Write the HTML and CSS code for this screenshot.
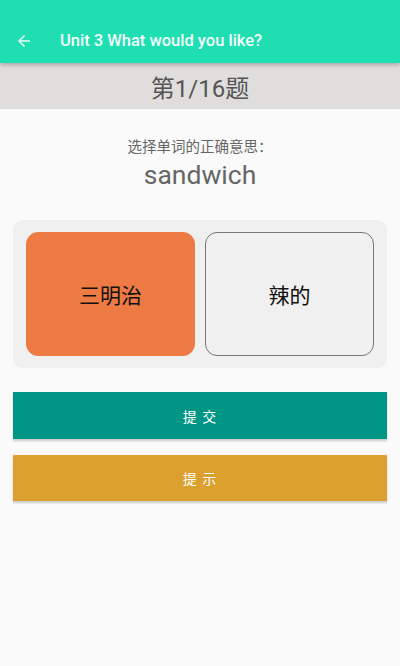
FILE: index.html
```html
<!DOCTYPE html>
<html lang="zh">
<head>
<meta charset="utf-8">
<link rel="stylesheet" href="styles.css">
</head>
<body>
<header class="appbar">
  <div class="toolbar">
    <svg class="back" width="18" height="18" viewBox="0 0 24 24"><path d="M20 11H7.83l5.59-5.59L12 4l-8 8 8 8 1.41-1.41L7.83 13H20v-2z" fill="#e8fff8"/></svg>
    <span class="title">Unit 3 What would you like?</span>
  </div>
</header>
<div class="progress">第1/16题</div>
<main class="content">
  <div class="prompt">选择单词的正确意思：</div>
  <div class="word">sandwich</div>
  <div class="options">
    <div class="opt selected">三明治</div>
    <div class="opt">辣的</div>
  </div>
  <button class="btn submit">提 交</button>
  <button class="btn hint">提 示</button>
</main>
</body>
</html>
```

FILE: styles.css
```css
* { box-sizing: border-box; }
html, body { margin: 0; padding: 0; }
body {
  width: 400px;
  height: 666px;
  background: #fafafa;
  font-family: Roboto, "Noto Sans CJK SC", sans-serif;
  overflow: hidden;
}
.appbar {
  background: #1fdeb2;
  height: 63px;
  padding-top: 19px;
  box-shadow: 0 2px 4px rgba(0,0,0,0.25);
  position: relative;
  z-index: 2;
}
.toolbar {
  height: 43px;
  display: flex;
  align-items: center;
}
.back { margin-left: 15px; margin-right: 27px; }
.title {
  color: #f4fffb;
  font-size: 16.5px;
  font-weight: 500;
}
.progress {
  height: 46px;
  background: #e0dedd;
  color: #555;
  font-size: 24px;
  display: flex;
  align-items: center;
  justify-content: center;
}
.content {
  padding: 0 13px;
  display: flex;
  flex-direction: column;
}
.prompt {
  margin-top: 29px;
  text-align: center;
  color: #666;
  font-size: 14.5px;
  line-height: 20px;
}
.word {
  text-align: center;
  color: #666;
  font-size: 26.5px;
  line-height: 30px;
  margin-top: 2px;
}
.options {
  margin-top: 30px;
  background: #f0f0f0;
  border-radius: 10px;
  padding: 12px 13px;
  display: flex;
  gap: 10px;
}
.opt {
  flex: 1;
  height: 124px;
  border-radius: 12px;
  border: 1.5px solid #777;
  background: #f0f0f0;
  display: flex;
  align-items: center;
  justify-content: center;
  font-size: 21px;
  color: #111;
}
.opt.selected {
  background: #ef7b44;
  border-color: #ef7b44;
}
.btn {
  border: none;
  width: 100%;
  color: #fff;
  font-family: Roboto, "Noto Sans CJK SC", sans-serif;
  font-size: 14px;
  letter-spacing: 1px;
  box-shadow: 0 2px 2px rgba(0,0,0,0.2);
  padding: 0;
}
.submit {
  margin-top: 24px;
  height: 47px;
  background: #009686;
}
.hint {
  margin-top: 16px;
  height: 46px;
  background: #dba02d;
}
```
